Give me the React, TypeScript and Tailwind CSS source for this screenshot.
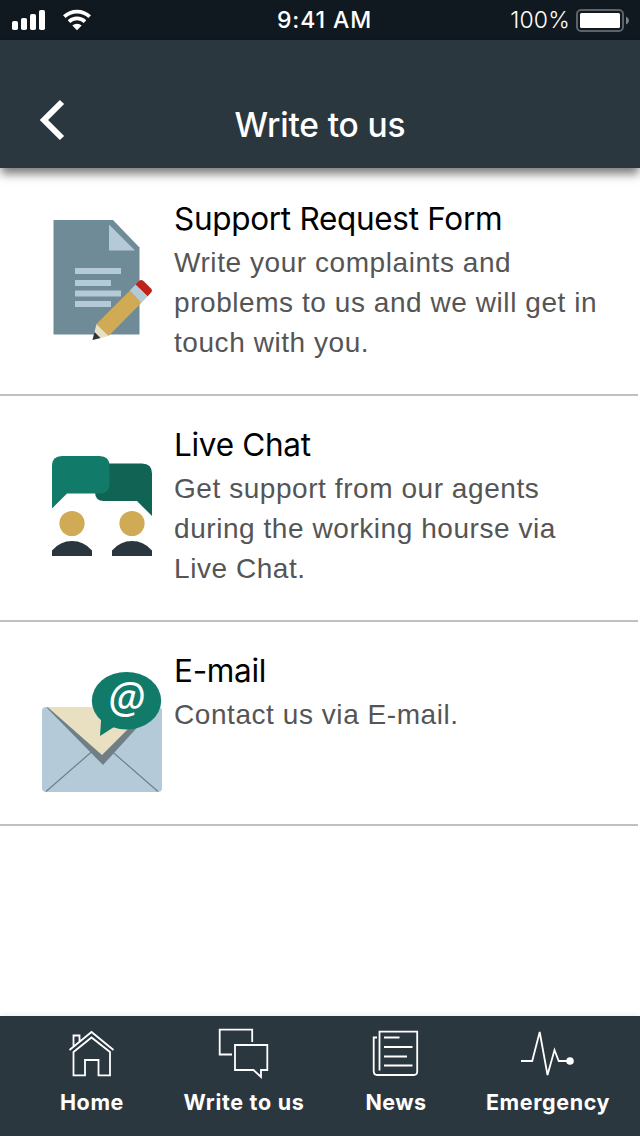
import type { ReactNode } from "react";

function StatusBar() {
  return (
    <div className="grid h-10 grid-cols-3 items-center bg-[#10191f] text-[23px] text-white">
      <svg className="h-10 w-[100px]" viewBox="0 0 100 40" fill="#fff">
        <rect x="12" y="21" width="6" height="9" rx="1.8" />
        <rect x="21" y="18" width="6" height="12" rx="1.8" />
        <rect x="30" y="14" width="6" height="16" rx="1.8" />
        <rect x="39" y="10" width="6" height="20" rx="1.8" />
        <path d="M64.3 16.7a18.3 18.3 0 0 1 25.4 0M69 21.6a11.8 11.8 0 0 1 16 0" fill="none" stroke="#fff" strokeWidth="3.7" />
        <path d="M72.3 25.6a6.8 6.8 0 0 1 9.4 0L77 30.2z" />
      </svg>
      <span className="pt-px pl-[9px] text-center font-medium tracking-[0.9px] whitespace-nowrap">9:41 AM</span>
      <div className="flex items-center justify-end gap-[6px] pr-[10px]">
        <span className="pt-px font-light tracking-[0.2px]">100%</span>
        <svg className="h-6 w-[54px]" viewBox="576 8 54 24">
          <rect x="577" y="10" width="46" height="21" rx="4" fill="none" stroke="#5b6368" strokeWidth="2" />
          <rect x="580" y="13" width="40" height="15" rx="1.5" fill="#fff" />
          <path d="M626 16.5q3 1.5 3 4t-3 4z" fill="#7b8387" />
        </svg>
      </div>
    </div>
  );
}

function FormIcon() {
  return (
    <svg className="h-[140px] w-[120px] shrink-0" viewBox="42 210 120 140">
      <path d="M53.5 220H113l26.5 27.5v87h-86z" fill="#708b98" />
      <path d="M109 224.5v26h26z" fill="#b4cad8" />
      <path d="M75 268h46v6H75zM75 280h36v6H75zM75 290.5h46v6H75zM75 301h36v6H75z" fill="#b4cad8" />
      <path d="M135.5 284.5l4-4q1.7-1.2 4 .5l8 8q1 1.5 0 3l-4 4.5z" fill="#bd231b" />
      <path d="M135.5 284.5l12 12-6.3 6.5-11.5-12.3z" fill="#b4cad8" />
      <path d="M129.7 290.7l11.5 12.3L108.500 336 96.500 324z" fill="#d1aa55" />
      <path d="M96.500 324l12 12-16 4z" fill="#e8e0c0" />
      <path d="M94.500 332l6 6-8 2z" fill="#29363f" />
    </svg>
  );
}

function ChatIcon() {
  return (
    <svg className="h-[140px] w-[120px] shrink-0" viewBox="42 436 120 140">
      <path d="M95 463.500h47q10 0 10 10v42.500l-15-15h-33q-9 0-9-9z" fill="#116353" />
      <path d="M62 456h37.500q10 0 10 10v17.500q0 10-10 10H67L52 508.500V466q0-10 10-10z" fill="#117a69" />
      <circle cx="72" cy="523.500" r="12.600" fill="#d1aa55" />
      <circle cx="132" cy="523.500" r="12.600" fill="#d1aa55" />
      <path d="M52 556v-5.500Q60 541 72 541t20 9.500v5.500zM112 556v-5.500q8-9.500 20-9.500t20 9.500v5.500z" fill="#29363f" />
    </svg>
  );
}

function MailIcon() {
  return (
    <svg className="h-[140px] w-[120px] shrink-0" viewBox="42 662 120 140">
      <rect x="42" y="707" width="120" height="85" rx="4" fill="#b4cad8" />
      <path d="M46 791.500l46-40M158 791.500l-46-40" stroke="#70808a" strokeWidth="1.200" />
      <path d="M46.500 707.500L103 765l52-57z" fill="#707e85" />
      <path d="M47.500 707L102 755l48-48z" fill="#e8e0c0" />
      <ellipse cx="126.500" cy="700.700" rx="34.700" ry="28.800" fill="#117a69" />
      <path d="M101.500 714L100 736l14-9z" fill="#117a69" />
      <text x="126.500" y="713.300" textAnchor="middle" fontFamily="'Noto Sans', sans-serif" fontStyle="italic" fontSize="43" fill="#fff">@</text>
    </svg>
  );
}

function Item({ icon, title, lines, className }: { icon: ReactNode; title: string; lines: string[]; className: string }) {
  return (
    <div className={`mr-[2px] flex items-start border-b-2 border-[#c0c0c0] pl-[42px] ${className}`}>
      {icon}
      <div className="-mt-[9px] ml-3 whitespace-nowrap">
        <h2 className="h-[42px] text-[31.500px] leading-[36px] tracking-[-0.3px] text-black">{title}</h2>
        <p className="font-['Liberation_Sans',Arial,sans-serif] text-[28px] leading-[40px] tracking-[0.560px] text-[#555]">
          {lines.map((line) => (
            <span key={line} className="block">{line}</span>
          ))}
        </p>
      </div>
    </div>
  );
}

function Tab({ label, children, viewBox, tracking }: { label: string; children: ReactNode; viewBox: string; tracking: string }) {
  return (
    <div className="flex flex-1 flex-col items-center pt-2">
      <svg className="h-[60px] w-[60px] shrink-0" viewBox={viewBox} fill="none" stroke="#fff" strokeWidth="1.800">
        {children}
      </svg>
      <span className={`mt-[4px] text-[21.500px] leading-[28px] font-bold whitespace-nowrap text-white ${tracking}`}>{label}</span>
    </div>
  );
}

export default function App() {
  return (
    <div className="flex h-[1136px] w-[640px] flex-col overflow-hidden bg-white font-[Inter,sans-serif]">
      <StatusBar />
      <header className="relative z-10 grid h-32 shrink-0 grid-cols-[100px_1fr_100px] items-center bg-[#2b373f] pt-8 shadow-[0_7px_9px_-1px_rgba(20,15,18,0.55)]">
        <svg className="ml-7 h-12 w-12" viewBox="28 96 48 48" fill="none" stroke="#fff" strokeWidth="6">
          <path d="M62 102L44 120 62 138" />
        </svg>
        <h1 className="mt-[9px] text-center text-[33.500px] leading-10 font-medium tracking-[-0.15px] text-white">Write to us</h1>
      </header>
      <main className="flex-1">
        <Item className="h-[228px] pt-[42px]" icon={<FormIcon />} title="Support Request Form" lines={["Write your complaints and", "problems to us and we will get in", "touch with you."]} />
        <Item className="h-[226px] pt-10" icon={<ChatIcon />} title="Live Chat" lines={["Get support from our agents", "during the working hourse via", "Live Chat."]} />
        <Item className="h-[204px] pt-10" icon={<MailIcon />} title="E-mail" lines={["Contact us via E-mail."]} />
      </main>
      <nav className="flex h-[120px] shrink-0 bg-[#2b373f] px-4 shadow-[0_-1px_6px_rgba(0,0,0,0.08)]">
        <Tab label="Home" viewBox="62 1024 60 60" tracking="tracking-[0.6px]">
          <path d="M69.500 1050l22-18 22 18M73.500 1046.500V1035.500h6v6M73.500 1052l18-14.500 18.500 14.500v23.300H98.500V1060H85v15.300H73.500z" />
        </Tab>
        <Tab label="Write to us" viewBox="214 1024 60 60" tracking="tracking-[0.7px]">
          <path d="M232 1054.500h-12.300v-24.800H252.200V1042M235 1045h32.300v25H261v7l-7.500-7H235z" />
        </Tab>
        <Tab label="News" viewBox="366 1024 60 60" tracking="tracking-[0.4px]">
          <path d="M379.500 1070.500v-38.800h37.700v39.800q0 3.500-3.500 3.500h-36.500q-3.500 0-3.500-4v-33.500h3.300M384 1037.500h15.500M384 1047h28.500M384 1056.500h23M384 1065.500h28.500" />
        </Tab>
        <Tab label="Emergency" viewBox="518 1024 60 60" tracking="tracking-[0.6px]">
          <path d="M521 1061h11.200l7.500-29 7.800 43 7-25 4.200 11H570" />
          <circle cx="570" cy="1061" r="3.800" fill="#fff" stroke="none" />
        </Tab>
      </nav>
    </div>
  );
}
